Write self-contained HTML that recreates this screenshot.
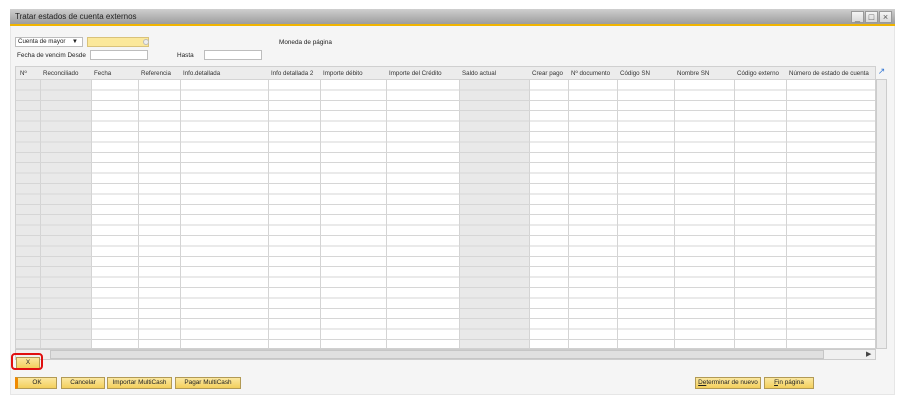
<!DOCTYPE html>
<html><head><meta charset="utf-8"><style>
*{box-sizing:border-box;margin:0;padding:0;white-space:nowrap}
body{width:916px;height:405px;background:#fff;font-family:"Liberation Sans",sans-serif;font-size:6.4px;color:#222;position:relative;overflow:hidden}
.a{position:absolute}
.win{left:10px;top:9px;width:885px;height:386px;background:#f5f5f5;border:1px solid #e6e6e6}
.title{left:10px;top:9px;width:885px;height:17px;background:linear-gradient(#cfcfcf,#9c9c9c);border-bottom:2px solid #f0b400;font-size:8px;color:#222;padding:3px 0 0 5px}
.tb{top:11px;width:13px;height:12px;background:linear-gradient(#f4f4f4,#d8d8d8);border:1px solid #999;font-size:9px;text-align:center;line-height:10px;color:#555}
.inp{height:10px;background:#fff;border:1px solid #bdbdbd}
.grid{left:15px;top:66px;width:861px;height:283px;background:#fff;border:1px solid #d0d0d0;overflow:hidden}
.col{top:0;height:283px;border-right:1px solid #d4d4d4}
.g{background:#e9e9e9}
.hd{left:0;top:0;width:861px;height:13px;background:#ececec;border-bottom:1px solid #d4d4d4}
.lines{left:0;top:13px;width:861px;height:270px}
.ht{top:3px;font-size:6.2px;color:#333}
.btn{height:12px;background:linear-gradient(#fbe7a0,#f3cf5c);border:1px solid #b29a55;font-size:6.4px;text-align:center;line-height:10px;color:#222;overflow:hidden}
</style></head><body>
<div class="a win"></div>
<div class="a title">Tratar estados de cuenta externos</div>
<div class="a tb" style="left:851px">_</div>
<div class="a tb" style="left:865px">&#9633;</div>
<div class="a tb" style="left:879px">&#215;</div>

<div class="a inp" style="left:15px;top:37px;width:68px;font-size:6.2px;padding-left:2px;line-height:8px">Cuenta de mayor <span style="position:absolute;right:4px">&#9660;</span></div>
<div class="a inp" style="left:87px;top:37px;width:62px;background:#fbe89b;border-color:#d9c27a"></div>
<div class="a" style="left:143px;top:39px;width:6px;height:6px;border-radius:50%;border:1px solid #bbb;background:#eee"></div>
<div class="a" style="left:279px;top:39px">Moneda de página</div>
<div class="a" style="left:17px;top:52px">Fecha de vencim Desde</div>
<div class="a inp" style="left:90px;top:50px;width:58px"></div>
<div class="a" style="left:177px;top:52px">Hasta</div>
<div class="a inp" style="left:204px;top:50px;width:58px"></div>

<div class="a grid">
<div class="a col g" style="left:0;width:25px"></div>
<div class="a col g" style="left:25px;width:51px"></div>
<div class="a col" style="left:76px;width:47px"></div>
<div class="a col" style="left:123px;width:42px"></div>
<div class="a col" style="left:165px;width:88px"></div>
<div class="a col" style="left:253px;width:52px"></div>
<div class="a col" style="left:305px;width:66px"></div>
<div class="a col" style="left:371px;width:73px"></div>
<div class="a col g" style="left:444px;width:70px"></div>
<div class="a col" style="left:514px;width:39px"></div>
<div class="a col" style="left:553px;width:49px"></div>
<div class="a col" style="left:602px;width:57px"></div>
<div class="a col" style="left:659px;width:60px"></div>
<div class="a col" style="left:719px;width:52px"></div>
<div class="a col" style="left:771px;width:90px"></div>
<div class="a lines" style="background:repeating-linear-gradient(to bottom,transparent 0,transparent 9.4px,#d6d6d6 9.4px,#d6d6d6 10.4px)"></div>
<div class="a hd"></div>
<div class="a ht" style="left:4px">Nº</div>
<div class="a ht" style="left:27px">Reconciliado</div>
<div class="a ht" style="left:78px">Fecha</div>
<div class="a ht" style="left:125px">Referencia</div>
<div class="a ht" style="left:167px">Info.detallada</div>
<div class="a ht" style="left:255px">Info detallada 2</div>
<div class="a ht" style="left:307px">Importe débito</div>
<div class="a ht" style="left:373px">Importe del Crédito</div>
<div class="a ht" style="left:446px">Saldo actual</div>
<div class="a ht" style="left:516px">Crear pago</div>
<div class="a ht" style="left:555px">Nº documento</div>
<div class="a ht" style="left:604px">Código SN</div>
<div class="a ht" style="left:661px">Nombre SN</div>
<div class="a ht" style="left:721px">Código externo</div>
<div class="a ht" style="left:773px">Número de estado de cuenta</div>
</div>
<div class="a" style="left:876px;top:66px;width:11px;height:13px;color:#3a7bd5;font-size:9px;text-align:center">&#8599;</div>
<div class="a" style="left:876px;top:79px;width:11px;height:270px;background:#ececec;border:1px solid #ccc"></div>
<div class="a" style="left:15px;top:349px;width:861px;height:11px;background:#f0f0f0;border:1px solid #ccc"></div>
<div class="a" style="left:50px;top:350px;width:774px;height:9px;background:#e0e0e0;border:1px solid #c6c6c6"></div>
<div class="a" style="left:866px;top:350px;font-size:7px;color:#444">&#9654;</div>

<div class="a btn" style="left:16px;top:357px;width:24px">X</div>
<div class="a" style="left:11px;top:353px;width:32px;height:17px;border:2px solid #e01010;border-radius:4px"></div>

<div class="a btn" style="left:15px;top:377px;width:42px;border-left:3px solid #f08a00">OK</div>
<div class="a btn" style="left:61px;top:377px;width:44px">Cancelar</div>
<div class="a btn" style="left:107px;top:377px;width:65px">Importar MultiCash</div>
<div class="a btn" style="left:175px;top:377px;width:66px">Pagar MultiCash</div>
<div class="a btn" style="left:695px;top:377px;width:66px"><u>De</u>terminar de nuevo</div>
<div class="a btn" style="left:764px;top:377px;width:50px"><u>F</u>in página</div>
</body></html>
